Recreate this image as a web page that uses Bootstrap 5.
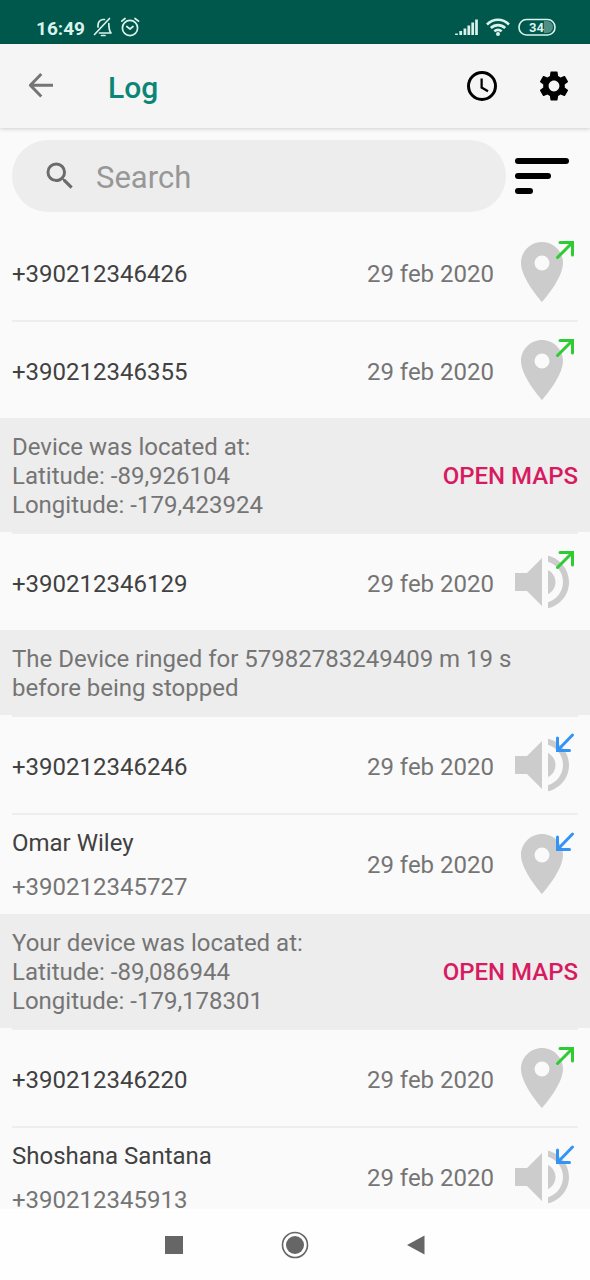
<!DOCTYPE html>
<html lang="en">
<head>
<meta charset="utf-8">
<meta name="viewport" content="width=device-width, initial-scale=1">
<title>Log</title>
<link href="https://cdn.jsdelivr.net/npm/bootstrap@5.3.0/dist/css/bootstrap.min.css" rel="stylesheet">
<style>
  body { font-family: Roboto, "Noto Sans", sans-serif; font-size: 24px; line-height: 29px; background: #fafafa; color: #414141; }
  svg { display: block; flex: none; }
  button.plain { background: none; border: 0; padding: 0; color: inherit; }
  .medium { font-weight: 500; }
  .status-bar { background: #00574b; color: #d9f3ec; height: 44px; padding: 10px 34px 0 36px; font-size: 19px; line-height: 34px; }
  .status-bar svg { fill: none; stroke: currentColor; }
  .app-bar { background: #f5f5f5; height: 84px; padding: 0 18px 0 23px; box-shadow: 0 1px 4px rgba(0,0,0,.18); z-index: 1; }
  .app-bar h1 { font-size: 30px; line-height: 36px; color: #0b8676; margin: 4px 0 0 49px; }
  .list { min-height: 0; }
  .search-row { padding: 12px 12px 10px; }
  .search-box { background: #ededed; border-radius: 36px; height: 72px; padding: 0 30px; gap: 18px; }
  .search-box input, .search-box input:focus { background: none; border: 0; box-shadow: none; padding: 3px 0 0; font-size: 31px; line-height: 36px; color: #414141; }
  .search-box input::placeholder { color: #979797; opacity: 1; }
  .entry { margin: 0 12px; border-top: 2px solid #eeeeee; height: 98px; padding-bottom: 1px; gap: 12px; }
  .entry.first { border-color: transparent; }
  .entry.named { height: 101px; }
  .entry-text { padding-top: 5px; }
  .entry.named .entry-text { padding-top: 3px; }
  .entry-text .sub { margin-top: 15px; }
  .muted { color: #757575; }
  .note { background: #ededed; color: #757575; padding: 15px 12px 12px; }
  .note .plain { color: #d81b60; line-height: 29px; }
  .kind { fill: #cccccc; }
  .kind .arrow { fill: none; stroke-width: 3; stroke-linecap: round; }
  .out { stroke: #2ecc33; }
  .in { stroke: #3394f5; }
  .nav-keys { background: #fefefe; height: 71px; gap: 73px; padding-right: 1px; color: #666; z-index: 1; }
</style>
</head>
<body>
<svg width="0" height="0" class="position-absolute" aria-hidden="true">
  <symbol id="pin" viewBox="0 0 24 24"><path d="M12 2C8.13 2 5 5.13 5 9c0 5.25 7 13 7 13s7-7.75 7-13c0-3.87-3.13-7-7-7zm0 9.5a2.5 2.5 0 0 1 0-5 2.5 2.5 0 0 1 0 5z"/></symbol>
  <symbol id="sound" viewBox="0 0 24 24"><path d="M3 9v6h4l5 5V4L7 9H3zm13.5 3c0-1.77-1.02-3.29-2.5-4.03v8.05c1.48-.73 2.5-2.25 2.5-4.02zM14 3.23v2.06c2.89.86 5 3.54 5 6.71s-2.11 5.85-5 6.71v2.06c4.01-.91 7-4.49 7-8.77s-2.99-7.86-7-8.77z"/></symbol>
  <symbol id="out" viewBox="0 0 72 72"><path d="M54 6.500H66.500v12.500M51.500 21.500L66 7"/></symbol>
  <symbol id="in" viewBox="0 0 72 72"><path d="M51.500 9V21.500H63.500M51.500 21.500L66.500 6"/></symbol>
</svg>

<div class="d-flex flex-column vh-100 overflow-hidden">
  <div class="status-bar d-flex align-items-center flex-shrink-0">
    <span class="fw-bold pt-1">16:49</span>
    <svg class="ms-2" width="20" height="20" viewBox="0 0 20 20" stroke-width="1.700" stroke-linecap="round" stroke-linejoin="round"><path d="M1.500 17.500L16.500 1.500M5 10V8C5.200 5 7 3 10 2.500H11.500M6.500 16H18C16 13.500 15.800 12 15.800 6.500M8.500 18.500H12"/></svg>
    <svg class="ms-2" width="20" height="20" viewBox="0 0 20 20" stroke-width="1.700" stroke-linecap="round" stroke-linejoin="round"><circle cx="9" cy="11" r="7.600"/><path d="M5.800 9.500L9 12L12 9.500M.8 4.200L4 1.500M14 1.500L17.500 4.200"/></svg>
    <svg class="ms-auto" width="24" height="20" viewBox="0 0 24 20" stroke-width="2.700"><path d="M2.500 18V16.500M6.700 18V14M10.900 18V11.500M14.800 18V8.500M18.700 18V5.500M22.500 18V2.500"/></svg>
    <svg class="ms-2" width="24" height="20" viewBox="0 0 24 20" stroke-width="2.600"><path d="M1 7.500C7.500 1.200 16.500 1.200 23 7.500M4.800 11C9 7.100 15 7.100 19.200 11M8.300 14.300C10.500 12.500 13.500 12.500 15.700 14.300"/><circle cx="12" cy="17" r="1" stroke-width="2"/></svg>
    <svg class="ms-2" width="38" height="20" viewBox="0 0 38 20"><path d="M26 4H29a6 6 0 0 1 0 12H26z" fill="#4f8f86" stroke="none"/><rect x="1" y="2.500" width="36" height="15.500" rx="7.500" stroke-width="1.600"/><text x="18.500" y="15" text-anchor="middle" font-size="13" font-weight="700" fill="currentColor" stroke="none">34</text></svg>
  </div>

  <header class="app-bar d-flex align-items-center flex-shrink-0">
    <button class="plain" aria-label="Back"><svg width="36" height="36" viewBox="0 0 24 24" fill="none" stroke="#757575" stroke-width="2"><path d="M20 11.500H5M12.200 4L4.900 11.500L12.200 19" stroke-linejoin="round"/></svg></button>
    <h1 class="medium">Log</h1>
    <button class="plain ms-auto" aria-label="History"><svg width="36" height="36" viewBox="0 0 24 24" fill="none" stroke="#000"><circle cx="12" cy="12" r="9" stroke-width="2"/><path d="M11.750 7V13L16 15.500" stroke-width="1.500"/></svg></button>
    <button class="plain ms-4 ps-2" aria-label="Settings"><svg class="ms-1" width="36" height="36" viewBox="0 0 24 24"><path d="M19.140 12.940c.04-.3.060-.61.060-.94 0-.32-.02-.64-.07-.94l2.030-1.580c.18-.14.230-.41.120-.61l-1.920-3.320c-.12-.22-.37-.29-.59-.22l-2.390.96c-.5-.38-1.030-.7-1.620-.94L14.400 2.810c-.04-.24-.24-.41-.48-.41h-3.840c-.24 0-.43.17-.47.41L9.250 5.350c-.59.24-1.130.57-1.620.94L5.240 5.330c-.22-.08-.47 0-.59.22L2.740 8.870c-.12.21-.08.47.12.61l2.030 1.580c-.05.3-.09.63-.09.940s.02.640.070.940l-2.030 1.580c-.18.14-.23.41-.12.610l1.920 3.320c.12.220.370.290.590.220l2.390-.96c.5.380 1.030.700 1.620.940l.360 2.540c.05.240.240.410.480.410h3.840c.24 0 .44-.17.470-.41l.360-2.540c.59-.24 1.130-.56 1.620-.94l2.390.960c.22.080.470 0 .590-.22l1.920-3.320c.12-.22.070-.47-.12-.61l-2.010-1.580zM12 15.600c-1.980 0-3.600-1.620-3.600-3.600s1.620-3.600 3.600-3.600 3.600 1.620 3.600 3.600-1.620 3.600-3.600 3.600z"/></svg></button>
  </header>

  <main class="list flex-fill overflow-hidden">
    <div class="search-row d-flex align-items-center">
      <label class="search-box d-flex align-items-center flex-fill">
        <svg width="36" height="36" viewBox="0 0 24 24" fill="#6b6b6b"><path d="M15.500 14h-.79l-.28-.27A6.471 6.471 0 0 0 16 9.500 6.500 6.500 0 1 0 9.500 16c1.610 0 3.090-.59 4.230-1.570l.27.280v.79l5 4.990L20.490 19l-4.990-5zm-6 0C7.010 14 5 11.990 5 9.500S7.010 5 9.500 5 14 7.010 14 9.500 11.990 14 9.500 14z"/></svg>
        <input type="text" class="form-control" placeholder="Search" aria-label="Search">
      </label>
      <button class="plain" aria-label="Sort"><svg width="72" height="72" viewBox="0 0 72 72" stroke="#000" stroke-width="6" stroke-linecap="round"><path d="M12 21H60M12 36H42M12 51H24"/></svg></button>
    </div>

    <div class="entry first d-flex align-items-center">
      <div class="entry-text me-auto">+390212346426</div><div class="entry-text muted">29 feb 2020</div>
      <svg class="kind" width="72" height="72"><use href="#pin"/><use href="#out" class="arrow out"/></svg>
    </div>
    <div class="entry d-flex align-items-center">
      <div class="entry-text me-auto">+390212346355</div><div class="entry-text muted">29 feb 2020</div>
      <svg class="kind" width="72" height="72"><use href="#pin"/><use href="#out" class="arrow out"/></svg>
    </div>
    <div class="note d-flex align-items-center justify-content-between">
      <div>Device was located at:<br>Latitude: -89,926104<br>Longitude: -179,423924</div>
      <button class="plain medium">OPEN MAPS</button>
    </div>
    <div class="entry d-flex align-items-center">
      <div class="entry-text me-auto">+390212346129</div><div class="entry-text muted">29 feb 2020</div>
      <svg class="kind" width="72" height="72"><use href="#sound"/><use href="#out" class="arrow out"/></svg>
    </div>
    <div class="note">The Device ringed for 57982783249409 m 19 s before being stopped</div>
    <div class="entry d-flex align-items-center">
      <div class="entry-text me-auto">+390212346246</div><div class="entry-text muted">29 feb 2020</div>
      <svg class="kind" width="72" height="72"><use href="#sound"/><use href="#in" class="arrow in"/></svg>
    </div>
    <div class="entry named d-flex align-items-center">
      <div class="entry-text me-auto">Omar Wiley<div class="sub muted">+390212345727</div></div><div class="entry-text muted">29 feb 2020</div>
      <svg class="kind" width="72" height="72"><use href="#pin"/><use href="#in" class="arrow in"/></svg>
    </div>
    <div class="note d-flex align-items-center justify-content-between">
      <div>Your device was located at:<br>Latitude: -89,086944<br>Longitude: -179,178301</div>
      <button class="plain medium">OPEN MAPS</button>
    </div>
    <div class="entry d-flex align-items-center">
      <div class="entry-text me-auto">+390212346220</div><div class="entry-text muted">29 feb 2020</div>
      <svg class="kind" width="72" height="72"><use href="#pin"/><use href="#out" class="arrow out"/></svg>
    </div>
    <div class="entry named d-flex align-items-center">
      <div class="entry-text me-auto">Shoshana Santana<div class="sub muted">+390212345913</div></div><div class="entry-text muted">29 feb 2020</div>
      <svg class="kind" width="72" height="72"><use href="#sound"/><use href="#in" class="arrow in"/></svg>
    </div>
  </main>

  <nav class="nav-keys d-flex align-items-center justify-content-center flex-shrink-0" aria-label="System">
    <button class="plain" aria-label="Recent apps"><svg width="48" height="48" viewBox="0 0 48 48" fill="currentColor"><path d="M15 15h18v18H15z"/></svg></button>
    <button class="plain" aria-label="Home"><svg width="48" height="48" viewBox="0 0 48 48" fill="currentColor"><circle cx="24" cy="24" r="9"/><circle cx="24" cy="24" r="12.500" fill="none" stroke="currentColor" stroke-width="1.600"/></svg></button>
    <button class="plain" aria-label="Go back"><svg width="48" height="48" viewBox="0 0 48 48" fill="currentColor"><path d="M15 24L32.500 14.500V33.500z"/></svg></button>
  </nav>
</div>
<script src="https://cdn.jsdelivr.net/npm/bootstrap@5.3.0/dist/js/bootstrap.bundle.min.js"></script>
</body>
</html>
